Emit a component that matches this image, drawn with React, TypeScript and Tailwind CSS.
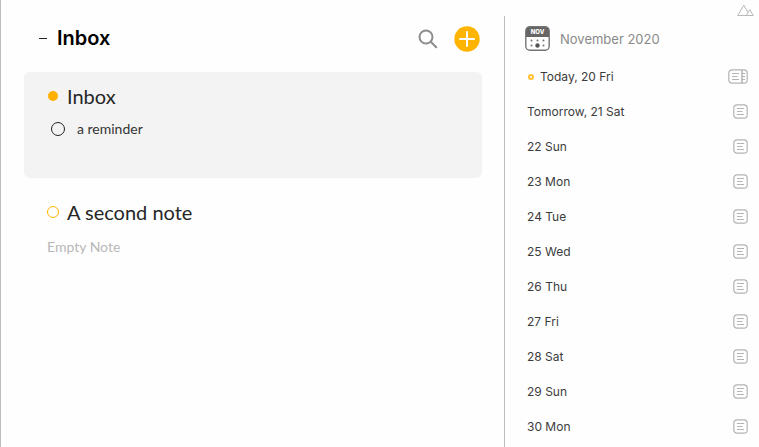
import clsx from "clsx";
import React from "react";

type Day = {
  label: string;
  today?: boolean;
};

type NoteHeadingProps = {
  title: string;
  active?: boolean;
};

const DAYS: Day[] = [
  { label: "Today, 20 Fri", today: true },
  { label: "Tomorrow, 21 Sat" },
  { label: "22 Sun" },
  { label: "23 Mon" },
  { label: "24 Tue" },
  { label: "25 Wed" },
  { label: "26 Thu" },
  { label: "27 Fri" },
  { label: "28 Sat" },
  { label: "29 Sun" },
  { label: "30 Mon" },
];

const SearchIcon = () => (
  <svg width="20" height="20" viewBox="0 0 20 20" fill="none" stroke="#8c8c8c" strokeWidth="2" strokeLinecap="round">
    <circle cx="8" cy="8" r="6.5" />
    <path d="M12.8 12.8 18.2 18.2" />
  </svg>
);

const PlusIcon = () => (
  <svg width="26" height="26" viewBox="0 0 26 26">
    <circle cx="13" cy="13" r="12.7" fill="#ffb400" />
    <path d="M13 6v14M6 13h14" stroke="#fff" strokeWidth="2" strokeLinecap="round" />
  </svg>
);

const CalendarIcon = () => (
  <svg width="25" height="25" viewBox="0 0 25 25">
    <rect x="0.8" y="0.8" width="23.4" height="23.4" rx="4" fill="#fff" stroke="#757575" strokeWidth="1.4" />
    <path d="M1 11V5A4 4 0 0 1 5 1h15a4 4 0 0 1 4 4v6Z" fill="#666" />
    <text x="12.5" y="8" textAnchor="middle" fontSize="6" fontWeight="800" fill="#fff" fontFamily="Inter, sans-serif">
      NOV
    </text>
    <g fill="#707070">
      <circle cx="6.5" cy="14.5" r="1" />
      <circle cx="12.5" cy="14.5" r="1" />
      <circle cx="18.5" cy="14.5" r="1" />
      <circle cx="6.5" cy="19.5" r="1" />
      <circle cx="12.5" cy="19.5" r="2.2" fill="#555" />
      <circle cx="18.5" cy="19.5" r="1" />
    </g>
  </svg>
);

const NoteIcon = () => (
  <svg width="15" height="15" viewBox="0 0 15 15" fill="none" stroke="#b4b4b4" strokeWidth="1.2">
    <rect x="0.8" y="0.8" width="13.4" height="13.4" rx="3.2" />
    <path d="M4 4.5h7M4 7.5h5.5M4 10.5h7" />
  </svg>
);

const TodayNoteIcon = () => (
  <svg width="20" height="15" viewBox="0 0 20 15" fill="none" stroke="#b4b4b4" strokeWidth="1.2">
    <rect x="0.8" y="0.8" width="18.4" height="13.4" rx="3.2" />
    <path d="M14 1v13" strokeWidth="1.5" />
    <path d="M4 4.5h7M4 7.5h5.5M4 10.5h7M14 4.5h3M14 7.5h3M14 10.5h3" />
  </svg>
);

const MountainsIcon = () => (
  <svg width="17" height="12" viewBox="0 0 17 12" fill="none" stroke="#b8b8b8" strokeLinejoin="round">
    <path d="M0.7 11.5 6.8 1.2l4 7M0.7 11.5h15.6M9.3 11.5l3.5-5.800 3.500 5.800" />
  </svg>
);

const NoteHeading = ({ title, active }: NoteHeadingProps) => (
  <div className="flex items-center gap-2">
    <button
      type="button"
      aria-label={`Mark ${title} as on the agenda`}
      className="flex size-3 items-center justify-center"
    >
      <span
        className={clsx(
          "shrink-0 rounded-full",
          active ? "size-2.5 bg-[#ffb000]" : "size-3 border border-[#ffb400]",
        )}
      />
    </button>
    <h2 className="text-[20px] leading-6 text-[#262626]">{title}</h2>
  </div>
);

const Notes = () => {
  return (
    <main className="min-w-0 flex-1 pr-[22px] pl-[23px]">
      <header className="flex h-[72px] items-center pt-1 pr-0.5 pl-[15px]">
        <button type="button" aria-label="Collapse list" className="flex h-6 w-2 items-center">
          <span className="h-px w-2 bg-[#222]" />
        </button>
        <h1 className="ml-2.5 font-[Inter,sans-serif] text-[20px] leading-6 font-semibold text-black">
          Inbox
        </h1>
        <div className="ml-auto flex items-center gap-4 pt-0.5">
          <button type="button" aria-label="Search">
            <SearchIcon />
          </button>
          <button type="button" aria-label="New note">
            <PlusIcon />
          </button>
        </div>
      </header>

      <article className="h-[106px] rounded-md bg-[#f3f3f3] px-[23px] pt-3">
        <NoteHeading title="Inbox" active />
        <label className="mt-[11px] ml-1 flex items-center gap-3 text-[14px] leading-5 text-[#333]">
          <input
            type="checkbox"
            className="size-3.5 appearance-none rounded-full border border-[#222] checked:bg-[#222]"
          />
          a reminder
        </label>
      </article>

      <article className="px-[23px] pt-[22px]">
        <NoteHeading title="A second note" />
        <p className="mt-[13px] text-[14px] leading-5 text-[#b8b8b8]">Empty Note</p>
      </article>
    </main>
  );
};

const Agenda = () => {
  return (
    <aside className="flex w-[255px] shrink-0 flex-col font-[Inter,sans-serif]">
      <div className="flex h-4 justify-end pt-1 pr-[5px]">
        <button type="button" aria-label="Appearance" className="h-3">
          <MountainsIcon />
        </button>
      </div>
      <div className="flex-1 border-l border-[#bdbdbd] pr-[11px] pl-5">
        <div className="flex h-[43px] items-center gap-2.5 pt-0.5">
          <CalendarIcon />
          <h2 className="text-[13px] leading-4 text-[#8a8a8a]">November 2020</h2>
        </div>
        <ul>
          {DAYS.map((day) => (
            <li key={day.label} className="flex h-[35px] items-center pl-0.5 text-[12px] leading-4 text-[#3c3c3c]">
              {day.today && <span className="mr-1.5 ml-px size-1.5 rounded-full border-2 border-[#ffc233]" />}
              <span>{day.label}</span>
              <button type="button" aria-label={`Open note for ${day.label}`} className="ml-auto">
                {day.today ? <TodayNoteIcon /> : <NoteIcon />}
              </button>
            </li>
          ))}
        </ul>
      </div>
    </aside>
  );
};

const App = () => {
  return (
    <div className="flex min-h-screen border-l border-[#bdbdbd] bg-[#fefefe] font-[Lato,sans-serif]">
      <Notes />
      <Agenda />
    </div>
  );
};

export default App;
